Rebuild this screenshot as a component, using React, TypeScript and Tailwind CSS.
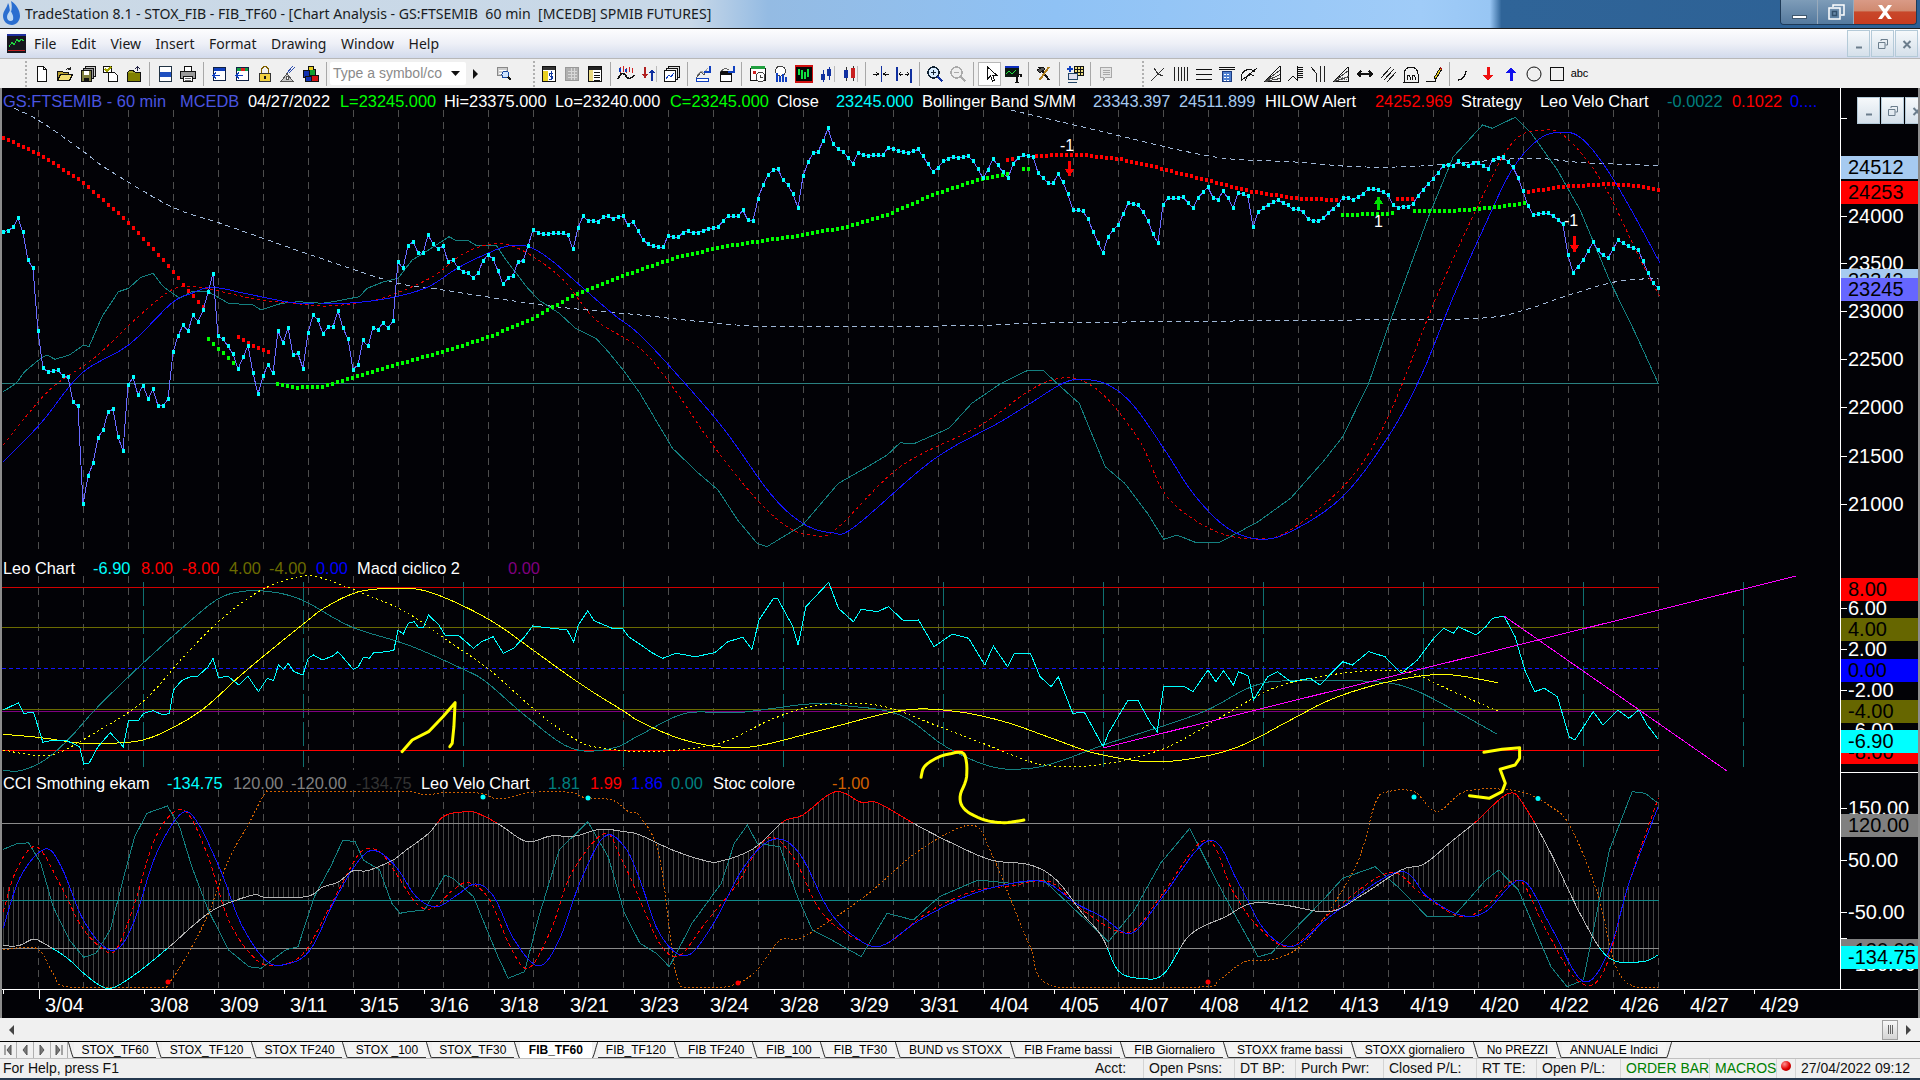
import React from "react"

type P = [number, number]

// series are read off the chart in two crops: left part x/2.45, right part 640+x/1.537, y/3 everywhere
const TOP = 90
const LOW = 550

const parse = (s: string, ox: number, sx: number, oy: number): P[] =>
  s.trim().split(/\s+/).map((t) => {
    const [x, y] = t.split(",").map(Number)
    return [ox + x / sx, oy + y / 3] as P
  })
const left = (s: string, oy: number) => parse(s, 0, 2.45, oy)
const right = (s: string, oy: number) => parse(s, 640, 1.537, oy)
const both = (l: string, r: string, oy: number) => [...left(l, oy), ...right(r, oy)]

const yAt = (pts: P[], x: number) => {
  for (let i = 1; i < pts.length; i++) {
    if (x <= pts[i][0]) {
      const [x0, y0] = pts[i - 1]
      const [x1, y1] = pts[i]
      return y0 + ((y1 - y0) * (x - x0)) / (x1 - x0 || 1)
    }
  }
  return pts[pts.length - 1][1]
}
const sample = (pts: P[], start: number): P[] => {
  const out: P[] = []
  for (let x = start; x <= pts[pts.length - 1][0]; x += 5) out.push([x, yAt(pts, x)])
  return out
}
// catmull-rom, the oscillators are smooth curves and the points above are sparse
const smooth = (p: P[]): P[] => {
  const out: P[] = []
  for (let i = 0; i < p.length - 1; i++) {
    const a = p[i - 1] ?? p[i]
    const b = p[i]
    const c = p[i + 1]
    const d = p[i + 2] ?? c
    for (let k = 0; k < 6; k++) {
      const t = k / 6
      const f = (m: number) =>
        0.5 * (2 * b[m] + (c[m] - a[m]) * t + (2 * a[m] - 5 * b[m] + 4 * c[m] - d[m]) * t * t + (3 * b[m] - a[m] - 3 * c[m] + d[m]) * t * t * t)
      out.push([f(0), f(1)])
    }
  }
  out.push(p[p.length - 1])
  return out
}
const line = (pts: P[]) => pts.map(([x, y]) => `${x.toFixed(1)},${y.toFixed(1)}`).join(" ")

const price = sample(
  both(
    "8,425 20,422 32,412 44,385 56,425 70,520 82,537 93,722 105,835 118,845 131,843 143,840 155,860 167,862 179,937 191,947 203,1245 215,1160 228,1120 241,1037 253,1020 265,965 277,957 289,1040 302,1085 314,878 326,862 338,915 351,885 363,927 375,898 387,947 399,947 411,935 424,785 436,738 448,705 460,725 473,675 485,695 497,663 509,610 522,550 534,738 546,747 558,767 570,790 583,838 595,803 607,763 620,850 633,917 645,855 657,823 669,850 681,723 693,760 706,712 718,797 730,790 743,838 755,725 767,675 779,690 791,733 804,710 816,710 828,663 840,713 853,748 865,840 877,825 889,750 901,772 914,712 926,720 938,697 950,715 963,693 975,515 987,537 1000,465 1012,455 1024,488 1037,490 1049,433 1061,462 1073,478 1085,467 1097,515 1110,510 1122,533 1134,545 1146,548 1159,565 1171,550 1183,512 1195,495 1208,507 1220,542 1233,585 1245,563 1257,557 1269,515 1282,512 1294,467 1306,418 1318,428 1330,433 1343,432 1355,430 1367,430 1380,430 1393,435 1405,483 1417,408 1429,377 1441,392 1454,393 1466,395 1478,380 1490,377 1502,387 1515,380 1527,377 1539,407 1551,395 1564,425",
    "0,435 8,460 22,470 36,472 43,438 57,445 70,420 85,432 100,420 120,410 135,378 150,380 158,360 167,395 175,392 183,310 195,260 205,238 212,238 220,270 232,295 243,355 252,240 265,190 275,185 289,115 298,170 312,185 328,222 335,188 345,197 375,195 382,170 395,182 410,190 428,178 440,215 452,250 465,215 480,200 490,205 503,195 515,220 528,268 543,205 555,240 567,268 575,210 590,195 605,200 612,250 625,275 632,290 643,250 655,295 665,360 680,362 690,390 698,435 712,490 720,435 735,405 750,340 765,345 778,378 790,440 797,462 805,325 820,325 835,322 850,355 860,315 873,292 885,340 897,300 912,355 920,305 935,320 943,420 950,365 965,345 980,330 995,345 1005,360 1015,355 1028,390 1045,395 1060,365 1075,340 1082,318 1095,330 1110,315 1120,295 1135,300 1150,315 1160,355 1172,350 1185,350 1195,320 1205,295 1222,260 1235,225 1250,228 1258,212 1270,230 1285,215 1305,238 1312,205 1328,202 1343,235 1350,265 1360,320 1370,375 1395,368 1405,380 1420,405 1428,520 1433,550 1450,510 1465,455 1475,490 1488,505 1503,450 1520,470 1535,480 1545,530 1555,575 1565,595",
    TOP
  ),
  3
)

const redDots = [
  left("8,143 100,195 200,275 300,380 400,510 460,600 500,655", TOP),
  left("585,742 620,768 670,790", TOP),
  right("565,210 580,205", TOP),
  right("610,197 680,195 740,208 800,235 870,270 940,305 1010,325 1075,330", TOP),
  right("1165,328 1190,327", TOP),
  right("1365,305 1420,290 1490,282 1530,288 1568,302", TOP),
]
const greenDots = [
  left("510,748 575,822", TOP),
  [
    ...left("680,883 730,893 790,890 860,865 960,828 1100,780 1200,740 1300,690 1400,620 1500,570 1568,540", TOP),
    ...right("60,500 130,470 250,435 320,410 380,375 450,315 510,275 570,250", TOP),
  ],
  right("590,238 605,235", TOP),
  right("1080,375 1160,370", TOP),
  right("1190,362 1250,362 1300,355 1360,340", TOP),
]

const mainTeal = both(
  "8,905 40,880 60,845 100,805 115,795 135,808 170,795 205,765 218,770 250,680 290,605 315,595 345,562 375,550 400,590 440,625 470,605 510,605 560,640 620,645 640,660 690,640 730,635 790,640 830,632 880,620 900,595 940,575 975,565 1010,510 1050,480 1100,440 1115,450 1145,450 1165,465 1215,465 1240,510 1290,590 1320,630 1370,670 1410,715 1460,745 1490,785 1530,845 1568,910",
  "50,1075 90,1150 120,1200 150,1290 180,1360 195,1370 250,1305 305,1180 350,1130 380,1095 400,1058 420,1062 475,1015 510,940 555,880 595,842 620,842 655,905 675,940 715,1130 745,1180 780,1270 805,1348 825,1335 855,1358 890,1358 950,1295 1000,1225 1050,1115 1080,1040 1120,880 1150,710 1210,390 1250,200 1295,105 1310,115 1345,82 1370,130 1410,240 1445,360 1490,570 1530,730 1565,880",
  TOP
)
const mainBlue = smooth(both(
  "8,1115 100,1000 200,850 315,765 420,640 470,610 520,592 600,610 700,635 770,642 880,637 970,620 1050,590 1120,535 1195,490 1245,468 1295,470 1350,510 1420,585 1500,670 1568,735",
  "60,860 130,1020 200,1210 250,1300 295,1328 330,1310 450,1110 550,1000 600,940 650,880 680,868 720,885 760,950 810,1090 850,1210 900,1310 950,1347 1000,1325 1080,1220 1150,1040 1200,860 1250,620 1300,400 1340,240 1380,150 1415,127 1450,150 1500,280 1568,520",
  TOP
))
const mainRed = smooth(both(
  "8,1065 60,985 130,890 230,805 330,690 420,600 480,590 560,610 640,630 720,640 800,648 900,635 970,610 1060,560 1130,495 1190,465 1240,463 1300,495 1380,570 1460,690 1568,775",
  "50,890 110,1060 180,1230 230,1315 265,1335 300,1320 400,1130 520,1010 600,900 645,865 680,872 720,930 770,1060 810,1220 880,1320 945,1347 1000,1320 1090,1170 1150,980 1220,640 1280,380 1340,160 1390,120 1425,145 1480,280 1540,520 1568,620",
  TOP
))
const bandLow = smooth(both(
  "35,55 100,95 205,185 260,235 420,350 540,400 750,490 960,575 1060,595 1200,622 1360,650 1568,675",
  "120,700 220,710 500,707 600,700 800,695 1100,690 1290,685 1360,660 1420,620 1500,575 1565,565",
  TOP
))
const bandHigh = smooth(right("570,60 700,120 880,200 1000,215 1100,230 1200,228 1360,205 1450,218 1565,227", TOP))

const leoCyan = both(
  "8,480 45,458 58,490 82,487 105,577 130,570 160,570 195,590 205,642 218,640 240,590 270,548 302,590 315,510 340,510 352,490 375,482 400,495 415,490 425,420 445,392 470,378 485,378 510,350 522,325 535,382 560,380 585,405 607,378 633,425 655,385 670,392 682,345 695,358 706,340 720,365 742,375 755,325 768,315 790,330 815,318 828,305 840,322 865,358 878,350 890,322 905,325 915,308 950,305 965,300 975,240 988,252 1000,220 1015,215 1025,232 1037,232 1050,195 1075,225 1090,255 1125,258 1160,295 1180,275 1208,260 1233,310 1258,295 1282,265 1305,228 1390,240 1405,277 1417,225 1440,182 1455,212 1500,235 1525,235 1540,260 1564,280",
  "20,310 35,325 55,310 85,320 115,308 135,275 158,262 172,298 183,210 205,145 212,147 235,230 243,285 255,170 290,97 305,175 328,215 340,178 365,185 382,170 405,212 428,210 452,290 480,252 505,265 530,345 543,288 565,350 575,312 600,310 615,380 632,410 643,380 665,490 683,487 712,590 720,550 750,450 765,450 785,520 795,545 805,408 835,408 850,425 873,360 885,395 897,362 912,405 920,365 935,378 943,450 965,380 980,365 1000,395 1030,385 1045,405 1080,335 1095,345 1120,305 1145,320 1170,370 1195,330 1220,265 1235,235 1250,250 1258,230 1285,255 1300,230 1310,205 1328,198 1345,260 1360,360 1375,425 1390,415 1410,440 1428,560 1437,570 1465,485 1480,525 1503,480 1520,505 1535,480 1548,525 1565,568",
  LOW
)
const leoYellow = smooth(both(
  "8,553 100,563 200,580 270,580 350,570 420,535 500,475 600,365 740,225 800,170 880,125 970,115 1040,122 1130,165 1220,225 1300,295 1420,400 1530,485 1568,515",
  "60,565 120,590 180,588 280,540 400,482 480,483 560,515 640,570 700,610 780,635 850,625 920,590 1000,510 1060,450 1130,405 1200,378 1250,375 1318,398",
  LOW
))
const leoYellowDash = smooth(both(
  "8,600 80,615 140,610 230,550 350,455 450,320 540,210 640,120 740,78 790,85 900,135 1000,190 1100,275 1200,360 1320,490 1420,575 1480,595 1568,605",
  "60,600 130,575 200,510 260,470 320,460 380,472 460,530 540,590 600,635 650,650 720,640 800,600 860,540 920,470 980,410 1060,375 1140,360 1190,372 1250,425 1318,483",
  LOW
))
const leoTeal = smooth(both(
  "8,660 50,662 110,630 170,565 240,470 350,340 450,230 530,150 590,125 660,125 740,150 860,230 1000,285 1130,355 1190,395 1290,500 1400,595 1500,595 1568,555",
  "70,490 150,488 260,462 320,468 400,495 470,590 540,650 600,655 650,630 720,580 860,490 940,410 1000,392 1130,395 1190,420 1260,490 1318,553",
  LOW
))

const cci = smooth(both(
  "8,1187 45,1187 80,1168 100,1175 160,1220 210,1275 250,1310 280,1312 340,1265 420,1185 470,1130 530,1075 620,1035 650,1042 750,1040 790,1012 830,995 865,962 900,962 960,932 990,905 1050,850 1090,797 1150,785 1180,795 1225,825 1280,870 1310,873 1350,858 1410,858 1470,838 1530,845 1568,855",
  "50,900 100,932 125,933 175,895 220,815 250,795 300,725 340,757 365,758 425,825 480,880 540,930 600,945 640,990 680,1090 710,1160 735,1262 770,1285 805,1272 845,1155 900,1100 940,1060 990,1065 1060,1085 1110,1035 1170,960 1205,942 1250,870 1285,815 1335,730 1360,770 1400,910 1450,1110 1490,1225 1540,1235 1565,1215",
  LOW
))
const stoc = smooth(both(
  "8,1200 90,1195 130,1270 170,1312 380,1312 420,1290 500,1120 560,930 610,820 650,730 680,724 980,724 1040,735 1090,728 1180,730 1210,745 1250,742 1300,727 1400,727 1430,742 1500,750 1540,785 1568,800",
  "30,920 55,1270 80,1312 130,1312 175,1270 215,1170 250,1162 345,1040 430,900 510,825 540,910 570,1050 600,1190 640,1312 860,1312 890,1290 930,1235 980,1225 1030,1160 1100,950 1130,760 1150,725 1190,725 1225,785 1270,723 1350,723 1400,770 1430,830 1470,1020 1500,1250 1530,1312 1565,1312",
  LOW
)).map(([x, y]) => [x, Math.min(y, 987)] as P)
const velTeal = both(
  "8,898 40,882 70,878 100,940 130,1070 170,1170 205,1222 235,1210 270,1140 310,950 330,860 360,790 410,768 440,830 470,950 510,1080 560,1200 610,1250 640,1255 700,1200 730,1190 770,1040 810,950 840,870 870,875 890,930 930,960 960,1060 980,1090 1000,1085 1040,1080 1090,975 1110,985 1160,1040 1190,1130 1220,1220 1245,1285 1285,1265 1320,1100 1370,900 1440,815 1490,920 1530,1090 1568,1180",
  "25,1210 45,1250 80,1120 125,1000 145,880 165,825 180,880 215,890 240,1030 265,1140 290,1165 340,1220 380,1090 420,1110 460,1040 520,990 570,1000 620,990 680,1100 720,1175 760,1080 800,940 845,835 880,970 910,1080 950,1220 970,1210 1020,1110 1050,1050 1080,985 1130,950 1170,1020 1210,1100 1250,1100 1300,990 1320,960 1350,1020 1400,1250 1425,1310 1450,1290 1490,900 1525,725 1545,730 1565,760",
  LOW
)
const velBlue = smooth(both(
  "8,1135 50,980 110,897 150,950 200,1100 250,1185 290,1195 330,1110 380,920 440,795 480,810 540,960 590,1120 650,1230 700,1243 760,1200 820,1050 880,930 920,902 970,950 1020,1040 1070,1070 1120,1035 1165,1002 1210,1040 1260,1170 1320,1248 1370,1170 1420,1000 1480,860 1530,890 1568,990",
  "30,1150 70,1218 110,1130 160,950 205,868 245,910 290,1080 330,1160 370,1188 430,1110 500,1040 560,1005 620,995 670,1060 710,1100 755,1150 800,1050 875,870 920,1000 960,1140 1005,1188 1060,1100 1165,965 1210,1040 1260,1095 1300,1085 1355,990 1400,1130 1450,1295 1490,1200 1520,1000 1565,770",
  LOW
))
const velRed = smooth(both(
  "8,1085 40,960 90,890 150,1010 200,1130 250,1195 285,1198 330,1060 375,880 420,792 460,790 510,920 560,1110 620,1220 670,1248 740,1215 800,1090 860,950 890,900 930,905 970,970 1020,1060 1060,1075 1110,1020 1150,998 1200,1050 1250,1190 1295,1255 1350,1140 1400,970 1480,850 1520,920 1568,1050",
  "30,1180 60,1218 100,1120 150,1000 195,865 235,920 280,1090 340,1175 380,1180 440,1090 510,1025 570,1008 630,995 680,1080 750,1148 800,1040 870,868 910,1020 950,1130 1000,1190 1060,1090 1150,968 1200,1030 1260,1100 1300,1070 1350,990 1390,1130 1440,1290 1480,1270 1520,1000 1565,745",
  LOW
))

const pen1 = left("985,605 1010,570 1050,545 1085,500 1115,458 1112,530 1108,580 1102,590", LOW)
const pen2 = smooth(right("432,682 437,650 455,625 475,612 498,612 502,680 492,740 500,780 530,810 560,818 590,810", LOW))
const pen3 = right("1297,607 1325,598 1352,593 1352,625 1345,645 1322,658 1330,700 1325,725 1305,745 1275,737", LOW)

const gridX = Array.from({ length: 37 }, (_, i) => 38.8 + 45 * i)
const leoX = Array.from({ length: 11 }, (_, i) => 143.5 + 160 * i)

const Dots = ({ sets, color }: { sets: P[][]; color: string }) => (
  <g fill={color}>
    {sets.map((s) =>
      sample(s, s[0][0]).map(([x, y]) => <rect key={`${x}-${y}`} x={x - 1.5} y={y - 2} width="3" height="4" />)
    )}
  </g>
)

const Arrow = ({ x, y1, y2, color }: { x: number; y1: number; y2: number; color: string }) => (
  <g fill={color}>
    <rect x={x - 1} y={Math.min(y1, y2)} width="3" height={Math.abs(y2 - y1)} />
    <polygon points={`${x - 4.5},${y2 - Math.sign(y2 - y1) * 7} ${x + 5.5},${y2 - Math.sign(y2 - y1) * 7} ${x + 0.5},${y2}`} />
  </g>
)

const Chart = () => (
  <svg width="1838" height="901" viewBox="2 88 1838 901" className="block" shapeRendering="crispEdges" fill="none">
    <defs>
      <clipPath id="cciHigh"><rect x="0" y="780" width="1700" height="43" /></clipPath>
      <clipPath id="cciMid"><rect x="0" y="823" width="1700" height="125" /></clipPath>
      <clipPath id="cciLow"><rect x="0" y="948" width="1700" height="45" /></clipPath>
    </defs>

    {/* grid */}
    <g stroke="#4d4d4d" strokeDasharray="7 5">
      {gridX.map((x) => (
        <React.Fragment key={x}>
          <line x1={x} x2={x} y1="110" y2="553" />
          <line x1={x} x2={x} y1="576" y2="770" />
          <line x1={x} x2={x} y1="790" y2="988" />
        </React.Fragment>
      ))}
    </g>

    {/* main panel */}
    <line x1="2" x2="1659" y1="383" y2="383" stroke="#2a8080" />
    <polyline points={line(bandLow)} stroke="#a0b8d8" strokeDasharray="5 4" />
    <polyline points={line(bandHigh)} stroke="#a0b8d8" strokeDasharray="5 4" />
    <polyline points={line(mainTeal)} stroke="#148080" />
    <polyline points={line(mainRed)} stroke="#e00000" strokeDasharray="3 3" />
    <polyline points={line(mainBlue)} stroke="#1414ff" />
    <Dots sets={redDots} color="#ff0000" />
    <Dots sets={greenDots} color="#00ff00" />
    <polyline points={line(price)} stroke="#6a6aff" />
    <g fill="#00ffff">
      {price.map(([x, y]) => <rect key={x} x={x - 1.5} y={y - 2} width="3" height="4" />)}
    </g>
    <Arrow x={1069} y1={161} y2={176} color="#ff0000" />
    <Arrow x={1378} y1={210} y2={197} color="#00e000" />
    <Arrow x={1574} y1={236} y2={252} color="#ff0000" />
    <g fill="#ffffff" fontFamily="'Liberation Sans', sans-serif" fontSize="16">
      <text x="1060" y="151">-1</text>
      <text x="1374" y="227">1</text>
      <text x="1564" y="226">-1</text>
    </g>

    {/* Leo panel */}
    <g stroke="#0f7070" strokeDasharray="24 4">
      {leoX.map((x) => <line key={x} x1={x} x2={x} y1="582" y2="767" />)}
    </g>
    <line x1="2" x2="1659" y1="587.5" y2="587.5" stroke="#d00000" />
    <line x1="2" x2="1659" y1="627.5" y2="627.5" stroke="#6b6b00" />
    <line x1="2" x2="1659" y1="668.5" y2="668.5" stroke="#1414ff" strokeDasharray="4 3" />
    <line x1="2" x2="1659" y1="709.5" y2="709.5" stroke="#6b6b00" />
    <line x1="2" x2="1659" y1="711.5" y2="711.5" stroke="#800080" />
    <line x1="2" x2="1659" y1="750.5" y2="750.5" stroke="#ff0000" />
    <polyline points={line(leoTeal)} stroke="#148080" />
    <polyline points={line(leoYellowDash)} stroke="#ffff00" strokeDasharray="2 3" />
    <polyline points={line(leoYellow)} stroke="#ffff00" />
    <polyline points={line(leoCyan)} stroke="#00ffff" />
    <line x1="1103" y1="748" x2="1796" y2="576" stroke="#ff00ff" />
    <line x1="1504" y1="616" x2="1727" y2="771" stroke="#ff00ff" />

    {/* CCI panel */}
    <g stroke="#454545">
      {sample(cci, 3).map(([x, y]) => <line key={x} x1={x} x2={x} y1="887" y2={y} />)}
    </g>
    <line x1="2" x2="1659" y1="823.5" y2="823.5" stroke="#8a8a8a" />
    <line x1="2" x2="1659" y1="900.5" y2="900.5" stroke="#0f8a8a" />
    <line x1="2" x2="1659" y1="948.5" y2="948.5" stroke="#8a8a8a" />
    <polyline points={line(stoc)} stroke="#d06000" strokeDasharray="2 2" />
    <polyline points={line(velTeal)} stroke="#148080" />
    <polyline points={line(velRed)} stroke="#ff0000" strokeDasharray="4 3" />
    <polyline points={line(velBlue)} stroke="#1414ff" />
    <polyline points={line(cci)} stroke="#b4b4b4" clipPath="url(#cciMid)" />
    <polyline points={line(cci)} stroke="#ff0000" clipPath="url(#cciHigh)" />
    <polyline points={line(cci)} stroke="#00ffff" clipPath="url(#cciLow)" />
    <g fill="#00ffff" shapeRendering="auto">
      <circle cx="483" cy="797" r="2.5" />
      <circle cx="588" cy="798" r="2.5" />
      <circle cx="1414" cy="797" r="2.5" />
      <circle cx="1538" cy="798.5" r="2.5" />
    </g>
    <g fill="#ff0000" shapeRendering="auto">
      <circle cx="168" cy="982" r="2.5" />
      <circle cx="738" cy="983" r="2.5" />
      <circle cx="1208" cy="982" r="2.5" />
    </g>

    {/* drawn by hand on the chart */}
    <g stroke="#ffff00" strokeWidth="3" strokeLinejoin="round" strokeLinecap="round" shapeRendering="auto">
      <polyline points={line(pen1)} />
      <polyline points={line(pen2)} />
      <polyline points={line(pen3)} />
    </g>
  </svg>
)

type LegendItem = { t: string; c: string; w?: string }

const mainLegend: LegendItem[] = [
  { t: "GS:FTSEMIB - 60 min", c: "text-[#4a55e0]", w: "w-[177px]" },
  { t: "MCEDB", c: "text-[#4a55e0]", w: "w-[68px]" },
  { t: "04/27/2022", c: "text-white", w: "w-[92px]" },
  { t: "L=23245.000", c: "text-[#00ff00]", w: "w-[104px]" },
  { t: "Hi=23375.000", c: "text-white", w: "w-[111px]" },
  { t: "Lo=23240.000", c: "text-white", w: "w-[115px]" },
  { t: "C=23245.000", c: "text-[#00ff00]", w: "w-[107px]" },
  { t: "Close", c: "text-white", w: "w-[59px]" },
  { t: "23245.000", c: "text-[#00ffff]", w: "w-[86px]" },
  { t: "Bollinger Band S/MM", c: "text-white", w: "w-[171px]" },
  { t: "23343.397", c: "text-[#a6caf0]", w: "w-[86px]" },
  { t: "24511.899", c: "text-[#a6caf0]", w: "w-[86px]" },
  { t: "HILOW Alert", c: "text-white", w: "w-[110px]" },
  { t: "24252.969", c: "text-[#ff0000]", w: "w-[86px]" },
  { t: "Strategy", c: "text-white", w: "w-[79px]" },
  { t: "Leo Velo Chart", c: "text-white", w: "w-[127px]" },
  { t: "-0.0022", c: "text-[#008080]", w: "w-[65px]" },
  { t: "0.1022", c: "text-[#ff0000]", w: "w-[58px]" },
  { t: "0....", c: "text-[#0000ff]" },
]
const leoLegend: LegendItem[] = [
  { t: "Leo Chart", c: "text-white", w: "w-[90px]" },
  { t: "-6.90", c: "text-[#00ffff]", w: "w-[48px]" },
  { t: "8.00", c: "text-[#ff0000]", w: "w-[41px]" },
  { t: "-8.00", c: "text-[#ff0000]", w: "w-[47px]" },
  { t: "4.00", c: "text-[#6b6b00]", w: "w-[40px]" },
  { t: "-4.00", c: "text-[#6b6b00]", w: "w-[47px]" },
  { t: "0.00", c: "text-[#0000ff]", w: "w-[41px]" },
  { t: "Macd ciclico 2", c: "text-white", w: "w-[151px]" },
  { t: "0.00", c: "text-[#800080]" },
]
const cciLegend: LegendItem[] = [
  { t: "CCI Smothing ekam", c: "text-white", w: "w-[164px]" },
  { t: "-134.75", c: "text-[#00ffff]", w: "w-[66px]" },
  { t: "120.00", c: "text-[#808080]", w: "w-[58px]" },
  { t: "-120.00", c: "text-[#808080]", w: "w-[65px]" },
  { t: "-134.75", c: "text-[#333333]", w: "w-[65px]" },
  { t: "Leo Velo Chart", c: "text-white", w: "w-[127px]" },
  { t: "1.81", c: "text-[#008080]", w: "w-[42px]" },
  { t: "1.99", c: "text-[#ff0000]", w: "w-[41px]" },
  { t: "1.86", c: "text-[#0000ff]", w: "w-[40px]" },
  { t: "0.00", c: "text-[#008080]", w: "w-[42px]" },
  { t: "Stoc colore", c: "text-white", w: "w-[119px]" },
  { t: "-1.00", c: "text-[#d06000]" },
]

const Legend = ({ items, className }: { items: LegendItem[]; className: string }) => (
  <div className={`absolute left-[1px] flex text-[16.4px] leading-[20px] whitespace-nowrap ${className}`}>
    {items.map((it, i) => (
      <span key={i} className={`shrink-0 ${it.c} ${it.w ?? ""}`}>{it.t}</span>
    ))}
  </div>
)

// y is the centre of the label on the page; later entries paint over earlier ones
const axisLabels: { t: string; y: number; bg?: string; tick?: boolean }[] = [
  { t: "24512", y: 167.5, bg: "bg-[#a6caf0]" },
  { t: "24253", y: 192.5, bg: "bg-[#ff0000]" },
  { t: "24000", y: 216, tick: true },
  { t: "23500", y: 263, tick: true },
  { t: "23343", y: 280.5, bg: "bg-[#a6caf0]" },
  { t: "23245", y: 289.5, bg: "bg-[#6666ff]" },
  { t: "23000", y: 311, tick: true },
  { t: "22500", y: 359, tick: true },
  { t: "22000", y: 407, tick: true },
  { t: "21500", y: 456, tick: true },
  { t: "21000", y: 504, tick: true },
  { t: "6.00", y: 608, tick: true },
  { t: "2.00", y: 649, tick: true },
  { t: "-2.00", y: 690, tick: true },
  { t: "8.00", y: 589.5, bg: "bg-[#ff0000]" },
  { t: "4.00", y: 629.5, bg: "bg-[#666600]" },
  { t: "0.00", y: 670.5, bg: "bg-[#0000ff]" },
  { t: "-4.00", y: 711.5, bg: "bg-[#666600]" },
  { t: "-6.00", y: 730, tick: true },
  { t: "-8.00", y: 752.5, bg: "bg-[#ff0000]" },
  { t: "-6.90", y: 741.5, bg: "bg-[#00ffff]" },
  { t: "150.00", y: 808, tick: true },
  { t: "50.00", y: 860, tick: true },
  { t: "-50.00", y: 912, tick: true },
  { t: "120.00", y: 825.5, bg: "bg-[#808080]" },
  { t: "-120.00", y: 950.5, bg: "bg-[#808080]" },
  { t: "-150.00", y: 964, tick: false },
  { t: "-134.75", y: 957.5, bg: "bg-[#00ffff]" },
]

const PriceAxis = () => (
  <div className="relative w-[78px] shrink-0 overflow-hidden border-l border-white text-[20px] leading-[23px]">
    <div className="absolute left-0 top-[30px] h-px w-[6px] bg-white" />
    <div className="absolute left-0 top-[850px] h-px w-[6px] bg-white" />
    {axisLabels.map((l) => (
      <div
        key={l.t + l.y}
        className={`absolute left-0 h-[23px] w-full pl-[7px] ${l.bg ? `${l.bg} text-black` : "text-white"}`}
        style={{ top: l.y - 88 - 11.5 }}
      >
        {l.tick && <span className="absolute left-0 top-[11px] h-px w-[6px] bg-white" />}
        {l.t}
      </div>
    ))}
    <div className="absolute left-0 top-[684px] h-px w-full bg-white" />
    <div className="absolute left-[16px] top-[9px] flex">
      <MdiButtons />
    </div>
  </div>
)

const MdiButtons = () => (
  <>
    {["min", "restore", "close"].map((k) => (
      <div
        key={k}
        className="mr-px flex h-[27px] w-[23px] items-center justify-center border border-[#b4cad8] bg-gradient-to-b from-[#f6f9fb] to-[#d5e0ea]"
      >
        <svg width="12" height="12" viewBox="0 0 12 12" fill="none" stroke="#6b7d8c" strokeWidth="1.5">
          {k === "min" && <path d="M3 9.500h6" strokeWidth="2" />}
          {k === "restore" && <path d="M4 3V1.500h6.500V7H8.500M1.500 4.500H8V10.500H1.500z" strokeWidth="1" />}
          {k === "close" && <path d="M2.500 3l7 7M9.500 3l-7 7" strokeWidth="2" />}
        </svg>
      </div>
    ))}
  </>
)

const dates = ["3/08", "3/09", "3/11", "3/15", "3/16", "3/18", "3/21", "3/23", "3/24", "3/28", "3/29", "3/31", "4/04", "4/05", "4/07", "4/08", "4/12", "4/13", "4/19", "4/20", "4/22", "4/26", "4/27", "4/29"]

const DateAxis = () => (
  <div className="relative h-[29px] shrink-0 border-t border-white pl-[43px] text-[20px] leading-[30px] text-white">
    <svg width="1838" height="10" className="absolute left-0 top-0" stroke="#ffffff" shapeRendering="crispEdges">
      <line x1="1" x2="1" y1="0" y2="4" />
      <line x1="37" x2="37" y1="0" y2="9" />
      {dates.map((_, i) => <line key={i} x1={142 + 70 * i} x2={142 + 70 * i} y1="0" y2="4" />)}
    </svg>
    <div className="flex">
      <span className="w-[105px] shrink-0">3/04</span>
      {dates.map((d) => <span key={d} className="w-[70px] shrink-0">{d}</span>)}
    </div>
  </div>
)

const Ic = ({ children }: { children: React.ReactNode }) => (
  <svg width="18" height="18" viewBox="0 0 18 18" fill="none" stroke="#111" strokeWidth="1" shapeRendering="crispEdges">
    {children}
  </svg>
)

const T = ({ children, pressed }: { children: React.ReactNode; pressed?: boolean }) => (
  <div className={`flex h-[24px] w-[23px] shrink-0 items-center justify-center ${pressed ? "border border-[#b8b8b8] bg-white" : ""}`}>
    <Ic>{children}</Ic>
  </div>
)
const Sep = () => (
  <div className="flex h-[24px] w-[8px] shrink-0 justify-center">
    <div className="h-full w-px bg-[#a8a8a8]" />
  </div>
)
const Grip = () => <div className="mx-[2px] h-[26px] w-[2px] shrink-0 border-l-2 border-dotted border-[#b0b0b0]" />

const Toolbar = () => (
  <div className="flex h-[30px] shrink-0 items-center border-t border-[#b8b8b8] bg-[#f0f0f0] pl-[23px]">
    <Grip />
    <div className="w-[1px] shrink-0" />
    <T><path d="M4.500 1.500h6l3 3v12h-9z" fill="#fff" /><path d="M10.500 1.500v3h3" /></T>
    <T><path d="M1.500 15.500v-9h5l1 1h5v8z" fill="#b8a030" /><path d="M1.500 15.500l3-6h12l-3 6z" fill="#f0dc70" /><path d="M10 5c1-2 3-2 4-1M14 2v2h-2" stroke="#222" /></T>
    <T><rect x="6.500" y="1.500" width="10" height="10" fill="#ccc" /><rect x="4.500" y="3.500" width="10" height="10" fill="#999" /><rect x="2.500" y="5.500" width="10" height="11" fill="#808040" /><rect x="5" y="6" width="5" height="4" fill="#fff" stroke="none" /><rect x="5" y="13" width="5" height="3" fill="#111" stroke="none" /></T>
    <T><rect x="1.500" y="1.500" width="8" height="6" fill="#fff" /><path d="M3 4l2 2 4-4" stroke="#a0a000" strokeWidth="1.500" /><path d="M6.500 7.500h6l3 3v6h-9z" fill="#fff" /></T>
    <T><rect x="2.500" y="7.500" width="13" height="9" fill="#808000" /><path d="M2.500 7.500l2-2h4l1 2" fill="#a0a020" /><path d="M12.500 6V1.500M10 4l2.500-2.500L15 4" stroke="#224" /></T>
    <Sep />
    <T><rect x="3.500" y="1.500" width="12" height="15" fill="#fff" stroke="#234" /><rect x="4" y="7" width="11" height="5" fill="#2050c0" stroke="none" /></T>
    <T><path d="M5.500 1.500h7v5h-7z" fill="#fff" /><path d="M1.500 6.500h15v7h-15z" fill="#9a9a9a" /><path d="M4.500 11.500h9v5h-9z" fill="#fff" /><path d="M6 13.500h6M6 15h6" stroke="#666" /></T>
    <Sep />
    <T><rect x="3.500" y="2.500" width="12" height="13" fill="#fff" stroke="#124" /><rect x="4" y="3" width="11" height="3" fill="#1040c0" stroke="none" /><path d="M10 10.500H3M6 8l-3 2.500L6 13" stroke="#1040c0" strokeWidth="1.500" /></T>
    <T><rect x="3.500" y="2.500" width="12" height="13" fill="#fff" stroke="#124" /><rect x="4" y="3" width="4" height="3" fill="#10a040" stroke="none" /><rect x="8" y="3" width="4" height="3" fill="#e02020" stroke="none" /><rect x="12" y="3" width="3" height="3" fill="#10a040" stroke="none" /><path d="M10 10.500H3M6 8l-3 2.500L6 13" stroke="#1040c0" strokeWidth="1.500" /></T>
    <T><path d="M5.500 8V5a3.500 3.500 0 0 1 7 0v3" stroke="#806000" strokeWidth="1.500" /><rect x="3.500" y="8.500" width="11" height="8" fill="#f0d040" stroke="#333" /><rect x="8" y="11" width="2" height="3" fill="#111" stroke="none" /></T>
    <T><path d="M2 16.500l6-8 6 8z" fill="#c8c8c8" stroke="#555" /><path d="M8 8l6-7M10 8l6-6" stroke="#3050b0" /><circle cx="8.500" cy="13" r="1.500" fill="#fff" stroke="#555" /></T>
    <T><rect x="6" y="1" width="6" height="6" fill="#111" stroke="none" /><rect x="1.500" y="5.500" width="7" height="7" fill="#1030b0" /><rect x="7.500" y="4.500" width="6" height="6" fill="#10a030" /><rect x="9.500" y="10.500" width="7" height="6" fill="#d01010" /><rect x="3.500" y="11.500" width="6" height="5" fill="#1030b0" /><rect x="7" y="2" width="4" height="3" fill="#e8d020" stroke="none" /></T>
    <Sep />
    <div className="flex h-[23px] w-[136px] shrink-0 items-center justify-between rounded-[2px] bg-white pl-[3px] pr-[6px] font-['Liberation_Sans'] text-[14px] text-[#8a8a8a]">
      <span>Type a symbol/co</span>
      <svg width="9" height="5"><polygon points="0,0 9,0 4.500,5" fill="#111" /></svg>
    </div>
    <div className="flex w-[18px] shrink-0 justify-center"><svg width="5" height="10"><polygon points="0,0 5,5 0,10" fill="#111" /></svg></div>
    <div className="w-[8px] shrink-0" />
    <T><rect x="2.500" y="2.500" width="10" height="8" fill="#ccc" stroke="#888" /><path d="M4 5h7M4 8h7" stroke="#fff" /><circle cx="10.500" cy="9.500" r="3.500" fill="#cfe4ff" stroke="#1848a0" /><path d="M13 12l3 3" stroke="#111" strokeWidth="2" /></T>
    <div className="w-[16px] shrink-0" />
    <Grip />
    <T><rect x="2.500" y="1.500" width="13" height="15" fill="#fff" /><rect x="3" y="2" width="12" height="3" fill="#333" stroke="none" /><rect x="3" y="6" width="5" height="10" fill="#e8d020" stroke="none" /><path d="M11 6v9M13 8h-3c-1 0 -1 3 0 3h2c1 0 1 3 0 3h-3" stroke="#1038a0" /></T>
    <T><rect x="2.500" y="2.500" width="13" height="13" fill="#b0b0b0" stroke="#999" /><path d="M5 6h9M5 9h9M5 12h9M8 3v12M11 3v12" stroke="#d8d8d8" /></T>
    <T><rect x="2.500" y="1.500" width="13" height="15" fill="#fff" /><rect x="3" y="2" width="12" height="3" fill="#222" stroke="none" /><rect x="3" y="5" width="4" height="11" fill="#e8d880" stroke="none" /><path d="M8 7.500h6M8 10h6M8 12.500h6M8 15h6" /></T>
    <Sep />
    <T><path d="M3 2v6M6 1v6M9 3v5M12 2v5M15 3v5" stroke="#d02020" /><path d="M3 3v4M9 4v3" stroke="#1040c0" strokeWidth="2" /><path d="M1 14c3-7 5-7 8-3s5 3 8-1" strokeWidth="1.500" /></T>
    <T><path d="M5 1.500v10M2.500 9l2.500 3L7.500 9" stroke="#b02020" strokeWidth="1.500" /><path d="M12 16V6M9.500 8L12 5.500 14.500 8" stroke="#1030a0" strokeWidth="1.500" /><path d="M16 1v16" stroke="#bbb" /></T>
    <T><rect x="5.500" y="1.500" width="11" height="11" fill="#ddd" /><rect x="3.500" y="3.500" width="11" height="11" fill="#eee" /><rect x="1.500" y="5.500" width="11" height="11" fill="#fff" /><path d="M3 14l3-4 2 2 3-4" stroke="#1040c0" /></T>
    <Sep />
    <T><path d="M2 13l5-6 3 3 3-5" stroke="#555" /><path d="M3 10l4-4 3 2 4-5" stroke="#aaa" /><path d="M16 1v6h-6" stroke="#1040c0" strokeWidth="1.500" /><rect x="2.500" y="13.500" width="12" height="3" fill="#fff" stroke="#1040c0" /></T>
    <T><rect x="3.500" y="6.500" width="11" height="10" fill="#fff" /><rect x="4" y="7" width="10" height="3" fill="#111" stroke="none" /><path d="M3 7l5-4 4 2" stroke="#666" /><path d="M17 1v6h-6" stroke="#1040c0" strokeWidth="1.500" /></T>
    <div className="flex h-[24px] w-[9px] shrink-0 justify-center"><div className="h-full w-px bg-[#a8a8a8]" /></div>
    <T><rect x="1.500" y="3.500" width="15" height="12" fill="#fff" /><rect x="2" y="1" width="14" height="3" fill="#20a040" stroke="none" /><circle cx="11.500" cy="12" r="4.500" fill="#fff" stroke="#444" /><path d="M11.500 9.500V12h2.500" stroke="#444" /><rect x="4" y="6" width="3" height="3" fill="#d02020" stroke="none" /></T>
    <T><circle cx="8.500" cy="6" r="5" fill="#fff" stroke="#444" /><path d="M5 17V8M8 17v-6M11 17v-8M14 17v-5" stroke="#1040c0" strokeWidth="1.500" /></T>
    <T><rect x="0" y="0" width="18" height="18" fill="#d01010" stroke="none" /><rect x="1" y="2" width="16" height="14" fill="#050505" stroke="none" /><path d="M4 4v6M7 5v9M10 7v7M13 4v8" stroke="#10e040" strokeWidth="1.500" /></T>
    <T><path d="M5 5v12M11 2v13" stroke="#1030a0" /><rect x="3" y="9" width="4" height="6" fill="#1030a0" stroke="none" /><rect x="9" y="4" width="4" height="7" fill="#1030a0" stroke="none" /><path d="M16 1v16" stroke="#bbb" /></T>
    <T><path d="M5 2v14M12 1v15" stroke="#333" /><rect x="3" y="5" width="4" height="8" fill="#1030a0" stroke="none" /><rect x="10" y="3" width="4" height="10" fill="#c82020" stroke="none" /><path d="M16 1v16" stroke="#bbb" /></T>
    <Sep />
    <T><path d="M9.500 1v16" stroke="#1030a0" strokeWidth="1.500" /><path d="M1 9h5M4 7l2.500 2L4 11M17 9h-5M14 7l-2.500 2 2.500 2" /></T>
    <T><path d="M2 2v14M16 4v14" stroke="#1030a0" strokeWidth="1.500" /><path d="M4 9h4M6 7L4 9l2 2M14 9h-4M12 7l2 2-2 2" /></T>
    <Sep />
    <T><circle cx="7.500" cy="7.500" r="5.500" fill="#d8ecff" stroke="#123" strokeWidth="1.500" /><path d="M5 7.500h5M7.500 5v5" stroke="#123" strokeWidth="1.500" /><path d="M11.500 11.500l5 5" stroke="#1030a0" strokeWidth="2.500" /></T>
    <T><circle cx="7.500" cy="7.500" r="5.500" fill="#eee" stroke="#aaa" strokeWidth="1.500" /><path d="M5 7.500h5" stroke="#aaa" strokeWidth="1.500" /><path d="M11.500 11.500l5 5" stroke="#aaa" strokeWidth="2.500" /></T>
    <div className="flex w-[9px] shrink-0 justify-center"><div className="h-[24px] w-px bg-[#a8a8a8]" /></div>
    <T pressed><path d="M6.500 2v12l3-3 2 5 2-1-2-5h4z" fill="#fff" /></T>
    <T><rect x="1" y="1" width="14" height="11" fill="#0a1a10" stroke="none" /><rect x="1" y="1" width="14" height="2" fill="#1030c0" stroke="none" /><path d="M2 9l3-3 3 3 4-4" stroke="#20e040" /><path d="M9 9.500h8v2M13 9.500v8M11 17.500h4" stroke="#111" strokeWidth="1.500" /></T>
    <Sep />
    <T><path d="M4 2l10 13" stroke="#111" strokeWidth="2" /><path d="M2 5l6-3 2 2-5 4z" fill="#555" /><path d="M14 2l-8 11" stroke="#b08020" strokeWidth="2" /><path d="M4 15l3-3" stroke="#b08020" strokeWidth="2.500" /></T>
    <Sep />
    <T><rect x="8.500" y="1.500" width="9" height="9" fill="#f0e080" /><path d="M8.500 4.500h9M8.500 7.500h9M11.500 1.500v9M14.500 1.500v9" /><path d="M4 1v6M1 4h6" stroke="#1040c0" strokeWidth="1.500" /><rect x="2.500" y="8.500" width="9" height="6" fill="#dde" stroke="#246" /><path d="M2 17h9" stroke="#246" /></T>
    <Sep />
    <T><path d="M3.500 2.500h11v10h-6l-2 3v-3h-3z" fill="#e4e4e4" stroke="#a8a8a8" /><path d="M5.500 5.500h7M5.500 7.500h7M5.500 9.500h7" stroke="#a8a8a8" /></T>
    <div className="w-[23px] shrink-0" />
    <Grip />
    <T><path d="M2 16L9 9M9 9l6-6M5 3l4 6 5 2" stroke="#333" /></T>
    <T><path d="M2.500 2v14M6.500 2v14M9.500 2v14M12.500 2v14M15.500 2v14" stroke="#222" /></T>
    <T><path d="M1 4.500h16M1 9.500h16M1 14.500h16" stroke="#111" strokeWidth="1.500" /></T>
    <T><path d="M1 2.500h16M1 4.500h16" /><rect x="4.500" y="6.500" width="9" height="10" fill="#5080d0" stroke="#1a3a80" /><path d="M6 9h6M6 12h6M6 15h6" stroke="#fff" strokeDasharray="2 1" /></T>
    <T><path d="M1 16a8 8 0 0 1 13-9" /><path d="M5 16a5 5 0 0 1 8-5" /><path d="M1 15L16 3" /></T>
    <T><path d="M1 16.500h16L16 1z" /><path d="M1 16.500L16 5M1 16.500l15-7M1 16.500l15-3" stroke="#444" /></T>
    <T><path d="M1 16l5-5 4 4V1" /><path d="M11 2.500h5M11 4.500h5M11 6.500h5M11 8.500h5M11 10.500h5M11 12.500h5" /></T>
    <T><path d="M1 2l5 6v9M10 1v16M14 1v16" stroke="#222" /></T>
    <T><path d="M1 16.500h15L15 2z" /><path d="M1 16.500L15 6M1 16.500l15-5" stroke="#444" /><path d="M3 14.500h11M5 12.500h9" stroke="#666" strokeDasharray="1 1" /></T>
    <T><path d="M2 9h14M5 6L2 9l3 3M13 6l3 3-3 3" stroke="#111" strokeWidth="1.500" /></T>
    <T><path d="M2 13L12 2M5 15L15 4M8 17L17 7" stroke="#222" /></T>
    <T><path d="M2 17V9a7 7 0 0 1 14 0v8" /><path d="M5 15V12a1.500 1.500 0 0 1 3 0v3M10 15V12a1.500 1.500 0 0 1 3 0v3" /><path d="M1 17h16" /></T>
    <T><path d="M1 16.500h9L12 12" /><path d="M9 13l6-10 2 1-6 10z" fill="#e8d020" /><path d="M15 3l2 1" stroke="#a01010" strokeWidth="2" /></T>
    <Sep />
    <T><path d="M2 15c4 0 7-3 8-9" stroke="#111" strokeWidth="1.300" /></T>
    <T><path d="M9 2v10" stroke="#ee1010" strokeWidth="3" /><polygon points="4,10 14,10 9,16" fill="#ee1010" stroke="none" /></T>
    <T><path d="M9 16V6" stroke="#1010ee" strokeWidth="3" /><polygon points="4,8 14,8 9,2" fill="#1010ee" stroke="none" /></T>
    <T><circle cx="9" cy="9" r="7" shapeRendering="auto" /></T>
    <T><rect x="2.500" y="2.500" width="13" height="13" /></T>
    <div className="flex w-[23px] shrink-0 justify-center font-['Liberation_Sans'] text-[11px] leading-none text-black">abc</div>
  </div>
)

const menu = ["File", "Edit", "View", "Insert", "Format", "Drawing", "Window", "Help"]

const MenuBar = () => (
  <div className="flex h-[29px] shrink-0 items-center bg-gradient-to-b from-[#fdfdfe] via-[#eef0f7] to-[#d2daec] pl-[7px]">
    <svg width="19" height="19" viewBox="0 0 19 19" className="mr-[8px] shrink-0" shapeRendering="crispEdges">
      <rect width="19" height="19" fill="#16161e" />
      <rect width="19" height="2" fill="#2030a0" />
      <path d="M2 13l3-5 2 3 3-6 2 3 2-3 3 2" stroke="#20d040" fill="none" />
      <path d="M1 16h17" stroke="#c02020" />
    </svg>
    <div className="flex gap-[14.500px] font-['Noto_Sans'] text-[14px] text-[#1a1a1a]">
      {menu.map((m) => <span key={m}>{m}</span>)}
    </div>
    <div className="ml-auto flex pr-[1px]"><MdiButtons /></div>
  </div>
)

const TitleBar = () => (
  <div className="flex h-[29px] shrink-0 items-start border-b border-[#1c1c1c] bg-[linear-gradient(90deg,#cbd9e6_0%,#c8d8e8_36%,#94bbe3_40%,#8fc2f5_55%,#a0ccf8_74%,#98c6f4_77.600%,#2f6498_78.200%,#2d6195_100%)] pl-[2px]">
    <svg width="20" height="26" viewBox="0 0 20 26" className="mr-[3px] shrink-0">
      <path d="M9 1c5 3 9 9 9 15 0 5-4 9-8 9-5 0-9-4-9-9C1 11 5 8 6 3c2 3 1 7 3 9 1-4 1-7 0-11z" fill="#2a6ed0" />
      <path d="M8 10c2 3 4 6 3 10-2 2-6 1-6-3 0-3 2-4 3-7z" fill="#bcd8f4" />
    </svg>
    <span className="whitespace-nowrap pt-[2px] font-['Noto_Sans'] text-[14.100px] leading-[24px] text-[#181c22]">
      {"TradeStation 8.1 - STOX_FIB - FIB_TF60 - [Chart Analysis - GS:FTSEMIB  60 min  [MCEDB] SPMIB FUTURES]".replace(/  /g, "\u00a0\u00a0")}
    </span>
    <div className="ml-auto mr-[3px] flex h-[25px] overflow-hidden rounded-b-[4px] border border-t-0 border-[#1d3a58]">
      <div className="flex w-[37px] items-end justify-center border-r border-[#9ab] bg-gradient-to-b from-[#7e9cb8] to-[#557a9e] pb-[5px]">
        <div className="h-[4px] w-[15px] border border-[#40586e] bg-white" />
      </div>
      <div className="flex w-[36px] items-center justify-center border-r border-[#9ab] bg-gradient-to-b from-[#7e9cb8] to-[#557a9e]">
        <svg width="18" height="16" viewBox="0 0 18 16" fill="none" stroke="#fff" strokeWidth="1.500">
          <path d="M6 3V1h11v10h-3" />
          <rect x="2" y="4" width="11" height="11" />
          <rect x="5.500" y="7.500" width="4" height="4" stroke="#33506c" />
        </svg>
      </div>
      <div className="flex w-[62px] items-center justify-center bg-[linear-gradient(180deg,#d99a86_0%,#d08a70_45%,#c8472a_50%,#c83c20_100%)]">
        <svg width="18" height="16" viewBox="0 0 18 16">
          <path d="M2 1h4l3 4 3-4h4l-5 7 5 7h-4l-3-4-3 4H2l5-7z" fill="#fff" />
        </svg>
      </div>
    </div>
  </div>
)

const ScrollBar = () => (
  <div className="flex h-[23px] shrink-0 items-center justify-between bg-[#f0f0f0] pl-[9px] pr-[9px]">
    <svg width="5" height="10"><polygon points="5,0 0,5 5,10" fill="#444" /></svg>
    <div className="flex items-center">
      <div className="mr-[8px] flex h-[20px] w-[16px] items-center justify-center gap-px border border-[#a0a0a0] bg-gradient-to-b from-[#f8f8f8] to-[#d4d4d4]">
        <span className="h-[9px] w-px bg-[#666]" />
        <span className="h-[9px] w-px bg-[#666]" />
        <span className="h-[9px] w-px bg-[#666]" />
      </div>
      <svg width="5" height="10"><polygon points="0,0 5,5 0,10" fill="#444" /></svg>
    </div>
  </div>
)

const tabs = ["STOX_TF60", "STOX_TF120", "STOX TF240", "STOX _100", "STOX_TF30", "FIB_TF60", "FIB_TF120", "FIB TF240", "FIB_100", "FIB_TF30", "BUND vs STOXX", "FIB Frame bassi", "FIB Giornaliero", "STOXX frame bassi", "STOXX giornaliero", "No PREZZI", "ANNUALE Indici"]

const Slant = ({ flip }: { flip?: boolean }) => (
  <svg width="6" height="17" viewBox="0 0 6 17" className="shrink-0" fill="none" stroke="#222">
    <path d={flip ? "M6 0C4 3 3 12 0 17" : "M0 0C2 3 3 12 6 17"} />
  </svg>
)

const TabStrip = () => (
  <div className="flex h-[17px] shrink-0 items-stretch border-t border-black bg-[#f0f0f0] font-['Liberation_Sans'] text-[12px] leading-[16px] text-black">
    <div className="flex w-[68px] shrink-0">
      {["M5 3v10M11 3L7 8l4 5z", "M10 3L6 8l4 5z", "M6 3l4 5-4 5z", "M11 3v10M5 3l4 5-4 5z"].map((d) => (
        <div key={d} className="flex w-[17px] items-center justify-center border-r border-[#b0b0b0]">
          <svg width="16" height="16" viewBox="0 0 16 16" fill="#777" stroke="#555"><path d={d} /></svg>
        </div>
      ))}
    </div>
    {tabs.map((t, i) => (
      <React.Fragment key={t}>
        <Slant flip={t === "FIB_TF120"} />
        <span
          className={`whitespace-nowrap ${i < 5 ? "px-[7.500px]" : i === 5 ? "px-[9px]" : "px-[8px]"} ${t === "FIB_TF60" ? "bg-white font-bold" : "border-b border-[#333] bg-[#f4f4f4]"}`}
        >
          {t}
        </span>
      </React.Fragment>
    ))}
    <Slant flip />
  </div>
)

const panels: { t: string; w: string; c?: string }[] = [
  { t: "Acct:", w: "w-[54px]" },
  { t: "Open Psns:", w: "w-[91px]" },
  { t: "DT BP:", w: "w-[61px]" },
  { t: "Purch Pwr:", w: "w-[88px]" },
  { t: "Closed P/L:", w: "w-[93px]" },
  { t: "RT TE:", w: "w-[60px]" },
  { t: "Open P/L:", w: "w-[84px]" },
  { t: "ORDER BAR", w: "w-[89px]", c: "text-[#008000]" },
  { t: "MACROS", w: "w-[67px]", c: "text-[#008000]" },
]

const StatusBar = () => (
  <div className="flex h-[20px] shrink-0 items-center border-t border-[#c0c0c0] bg-[#f0f0f0] font-['Liberation_Sans'] text-[14px] leading-[19px] text-[#111]">
    <span className="flex-1 pl-[3px]">For Help, press F1</span>
    {panels.map((p) => (
      <span key={p.t} className={`h-full shrink-0 whitespace-nowrap border-r border-[#d4d4d4] pl-[5px] ${p.w} ${p.c ?? ""}`}>{p.t}</span>
    ))}
    <span className="flex h-full w-[19px] shrink-0 justify-center border-r border-[#d4d4d4] pt-[2px]">
      <span className="h-[10px] w-[10px] rounded-full bg-[radial-gradient(circle_at_35%_30%,#ff9090,#e00000_55%,#800000)]" />
    </span>
    <span className="w-[124px] shrink-0 whitespace-nowrap pl-[5px]">27/04/2022 09:12</span>
  </div>
)

export default function App() {
  return (
    <div className="flex h-[1080px] w-[1920px] flex-col overflow-hidden bg-[#f0f0f0]">
      <TitleBar />
      <MenuBar />
      <Toolbar />
      <div className="flex h-[930px] shrink-0 flex-col border-x-2 border-[#8c8c8c] bg-[#020206] font-['Liberation_Sans']">
        <div className="flex h-[901px] shrink-0">
          <div className="relative h-full w-[1838px] shrink-0">
            <Chart />
            <Legend items={mainLegend} className="top-[3px]" />
            <Legend items={leoLegend} className="top-[470px]" />
            <Legend items={cciLegend} className="top-[685px]" />
          </div>
          <PriceAxis />
        </div>
        <DateAxis />
      </div>
      <ScrollBar />
      <TabStrip />
      <StatusBar />
      <div className="h-[2px] shrink-0 bg-[#25384f]" />
    </div>
  )
}
